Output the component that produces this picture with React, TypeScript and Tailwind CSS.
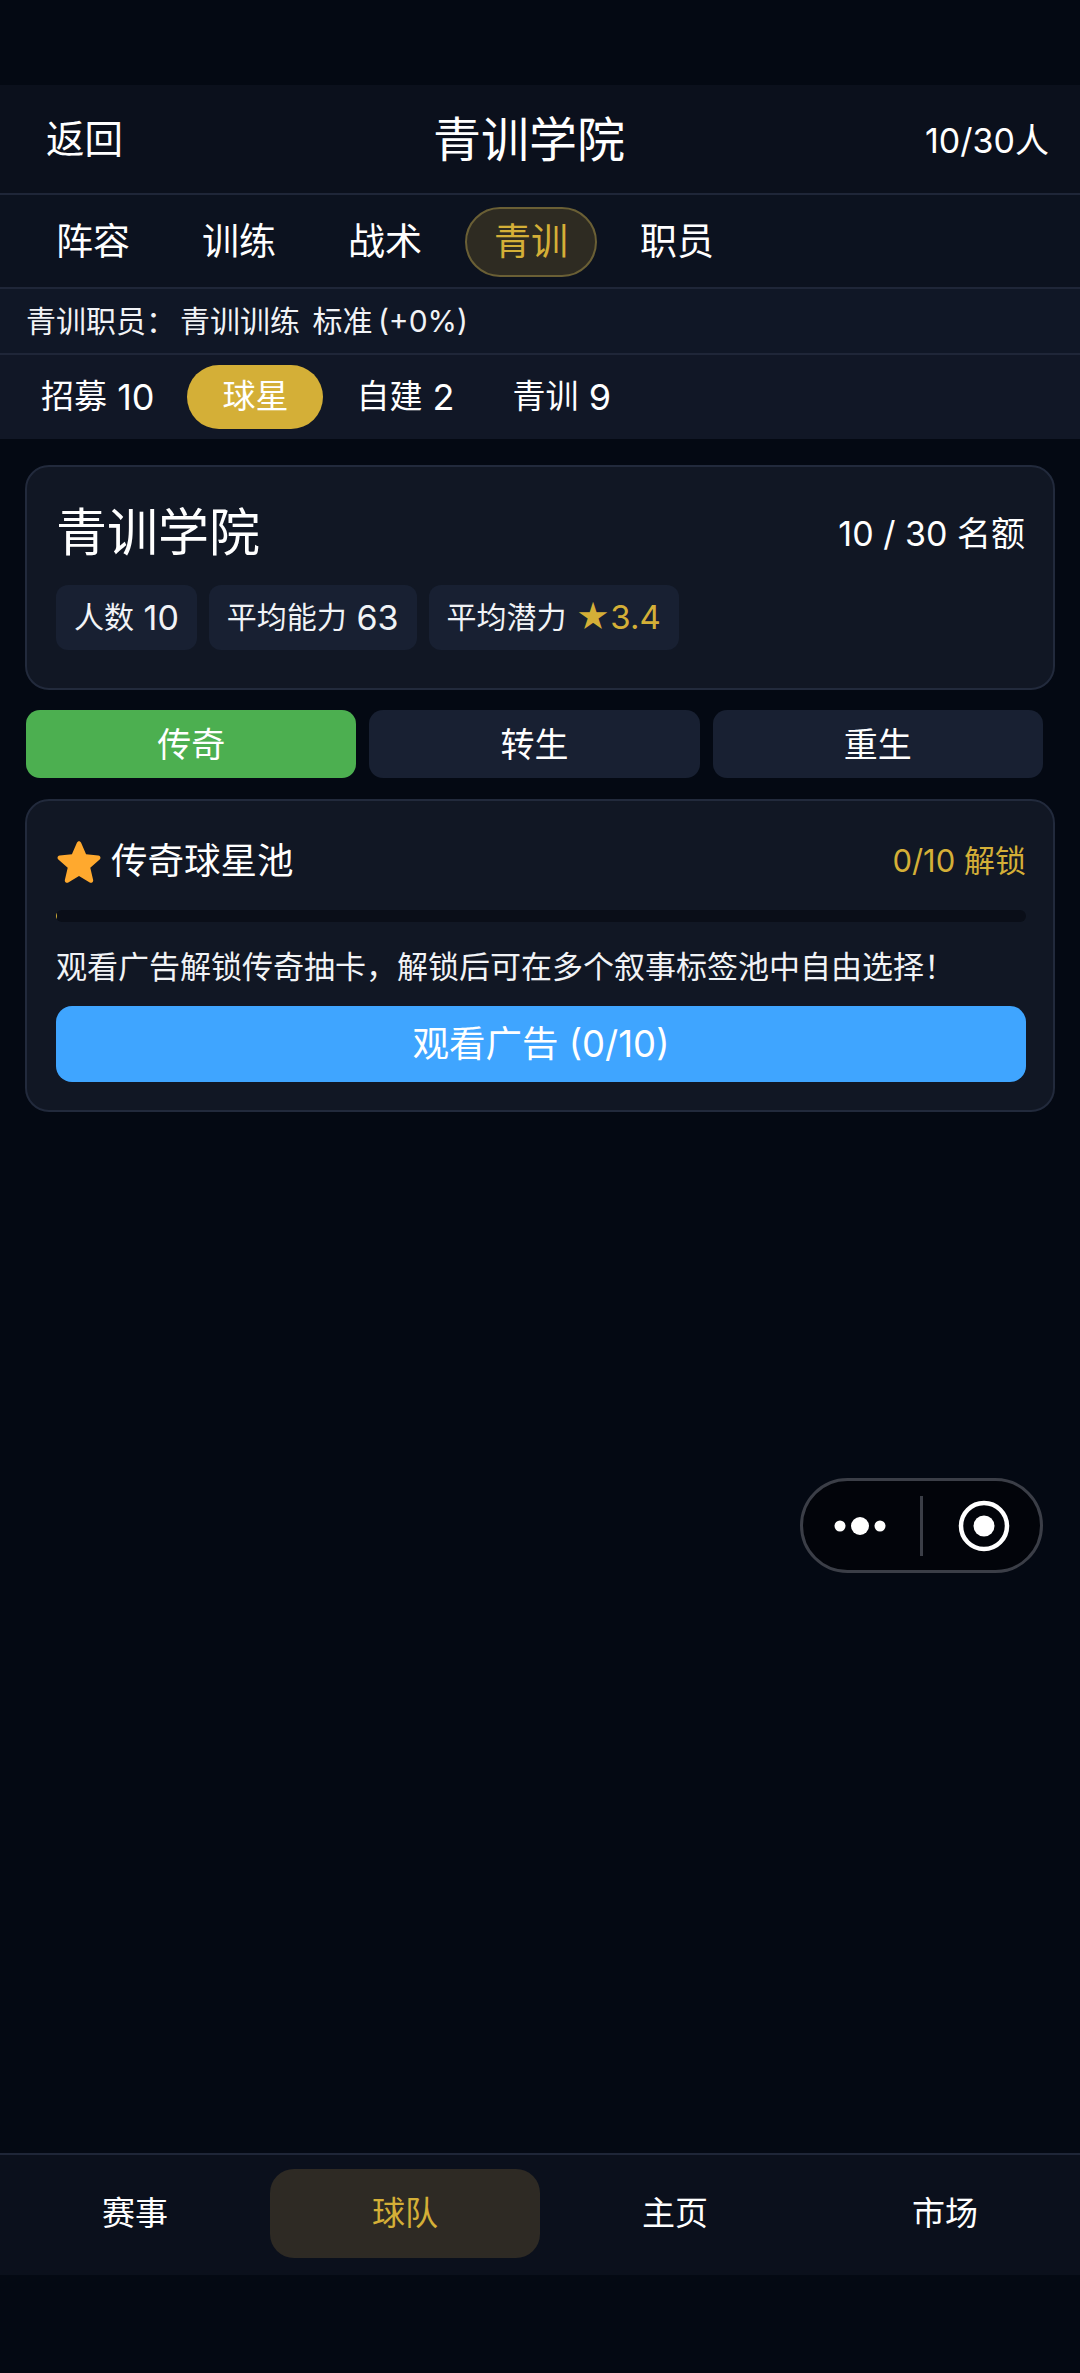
const font = "font-['Inter','Noto_Sans_CJK_SC',sans-serif]";

const mainTabs = ["阵容", "训练", "战术", "青训", "职员"];
const subTabs = [
  { label: "招募", count: "10" },
  { label: "球星", count: "" },
  { label: "自建", count: "2" },
  { label: "青训", count: "9" },
];
const poolTabs = ["传奇", "转生", "重生"];
const navItems = ["赛事", "球队", "主页", "市场"];

function Chip({ children }: { children: React.ReactNode }) {
  return (
    <div className="flex h-[65px] items-center whitespace-pre rounded-[12px] bg-[#182032] px-[18px] text-[30px] text-[#f1f3f6]">
      {children}
    </div>
  );
}

function Capsule() {
  return (
    <div className="absolute left-[800px] top-[1478px] flex h-[95px] w-[243px] items-center rounded-full border-[3px] border-[#3b3e47] bg-[#02040a]">
      <svg width="117" height="30" viewBox="0 0 117 30" className="shrink-0">
        <circle cx="37" cy="15" r="5.5" fill="#fff" />
        <circle cx="57" cy="15" r="9" fill="#fff" />
        <circle cx="77" cy="15" r="5.5" fill="#fff" />
      </svg>
      <div className="h-[60px] w-[3px] shrink-0 bg-[#3b3e47]" />
      <svg width="117" height="60" viewBox="0 0 117 60" className="shrink-0">
        <circle cx="61" cy="30" r="23" fill="none" stroke="#fff" strokeWidth="4.5" />
        <circle cx="61" cy="30" r="10.5" fill="#fff" />
      </svg>
    </div>
  );
}

export default function App() {
  return (
    <div className={`${font} relative flex min-h-[2373px] flex-col bg-[#040913] text-white`}>
      <div className="h-[85px]" />

      {/* header */}
      <div className="flex h-[108px] items-center justify-between bg-[#0b101c] pl-[46px] pr-[31px] pt-[2px]">
        <span className="text-[38.5px]">返回</span>
        <span className="ml-[10px] text-[48px]">青训学院</span>
        <span className="text-[34px]">10/30人</span>
      </div>

      {/* main tabs */}
      <div className="flex h-[96px] items-center gap-[14px] border-y-2 border-y-[#1f2638] bg-[#0c121f] pl-[27px] pt-[2px]">
        {mainTabs.map((t) => (
          <div
            key={t}
            className={
              t === "青训"
                ? "flex h-[70px] items-center rounded-full border-2 border-[#6a5f35] bg-[#2e2b22] px-[27px] text-[37px] text-[#d4af37]"
                : "flex h-[70px] items-center px-[29px] text-[37px]"
            }
          >
            {t}
          </div>
        ))}
      </div>

      <div className="flex h-[66px] shrink-0 items-center whitespace-pre border-b-2 border-b-[#1f2638] bg-[#101726] pl-[26px] text-[30px] text-[#f1f3f6]">
        青训职员：<span className="ml-[4px]">青训训练</span>
        <span className="ml-[4px]"> 标准</span>
        <span className="ml-[-3px]"> (+0%)</span>
      </div>

      {/* sub tabs */}
      <div className="flex h-[84px] items-center gap-[8px] bg-[#111726] pl-[16px]">
        {subTabs.map((t) => (
          <div
            key={t.label}
            className={
              t.label === "球星"
                ? "flex h-[64px] items-center rounded-full bg-[#d4af37] px-[35px] text-[33px]"
                : "flex h-[64px] items-center whitespace-pre px-[25px] text-[33px]"
            }
          >
            {t.label}
            {t.count && <span className="text-[36px]"> {t.count}</span>}
          </div>
        ))}
      </div>

      {/* academy card */}
      <div className="ml-[25px] mr-[25px] mt-[26px] h-[225px] rounded-[24px] border-2 border-[#222a3c] bg-[#111724] pl-[29px] pr-[28px] pt-[30px]">
        <div className="flex h-[72px] items-center justify-between">
          <span className="text-[51px]">青训学院</span>
          <span className="whitespace-pre text-[34px]">10 / 30 名额</span>
        </div>
        <div className="mt-[16px] flex gap-[12px]">
          <Chip>
            人数<span className="text-[34px]"> 10</span>
          </Chip>
          <Chip>
            平均能力<span className="text-[34px]"> 63</span>
          </Chip>
          <Chip>
            平均潜力<span className="text-[33px] text-[#d4af37]"> ★3.4</span>
          </Chip>
        </div>
      </div>

      {/* pool tabs */}
      <div className="ml-[26px] mr-[37px] mt-[20px] grid grid-cols-3 gap-[13px]">
        {poolTabs.map((t) => (
          <div
            key={t}
            className={`flex h-[68px] items-center justify-center rounded-[14px] text-[34px] ${
              t === "传奇" ? "bg-[#4caf50]" : "bg-[#182032]"
            }`}
          >
            {t}
          </div>
        ))}
      </div>

      {/* legend pool card */}
      <div className="ml-[25px] mr-[25px] mt-[21px] h-[313px] rounded-[24px] border-2 border-[#222a3c] bg-[#111724] pl-[29px] pr-[27px] pt-[30px]">
        <div className="flex h-[60px] items-center justify-between">
          <div className="flex items-center gap-[9px]">
            <svg width="46" height="44" viewBox="0 0 24 23">
              <path
                d="M12 1.2c.5 0 .9.3 1.1.8l2.6 6 6.4.6c1.1.1 1.5 1.4.7 2.1l-4.9 4.3 1.5 6.4c.2 1-.9 1.8-1.8 1.3L12 19.3l-5.6 3.4c-.9.5-2-.3-1.8-1.3l1.5-6.4-4.9-4.3c-.8-.7-.4-2 .7-2.1l6.4-.6 2.6-6c.2-.5.6-.8 1.1-.8z"
                fill="#ffa92e"
              />
            </svg>
            <span className="text-[36.5px]">传奇球星池</span>
          </div>
          <span className="text-[31px] text-[#d4af37]">0/10 解锁</span>
        </div>
        <div className="mt-[19px] h-[12px] overflow-hidden rounded-full bg-[#0a0e18]">
          <div className="h-full w-[1px] bg-[#d4af37]" />
        </div>
        <div className="mt-[25px] h-[40px] whitespace-nowrap text-[31px] leading-[40px] text-[#f1f3f6]">
          观看广告解锁传奇抽卡，解锁后可在多个叙事标签池中自由选择！
        </div>
        <div className="mt-[19px] flex h-[76px] items-center justify-center rounded-[16px] bg-[#3fa5ff] text-[36.5px]">
          观看广告 (0/10)
        </div>
      </div>

      <div className="flex-1" />

      {/* bottom nav */}
      <div className="grid h-[122px] grid-cols-4 border-t-2 border-t-[#1f2638] bg-[#0b101c] pt-[14px]">
        {navItems.map((t) => (
          <div key={t} className="flex justify-center">
            <div
              className={`flex h-[89px] w-[270px] items-center justify-center rounded-[24px] text-[33px] ${
                t === "球队" ? "bg-[#2e2a24] text-[#d4af37]" : ""
              }`}
            >
              {t}
            </div>
          </div>
        ))}
      </div>
      <div className="h-[98px]" />

      <Capsule />
    </div>
  );
}
